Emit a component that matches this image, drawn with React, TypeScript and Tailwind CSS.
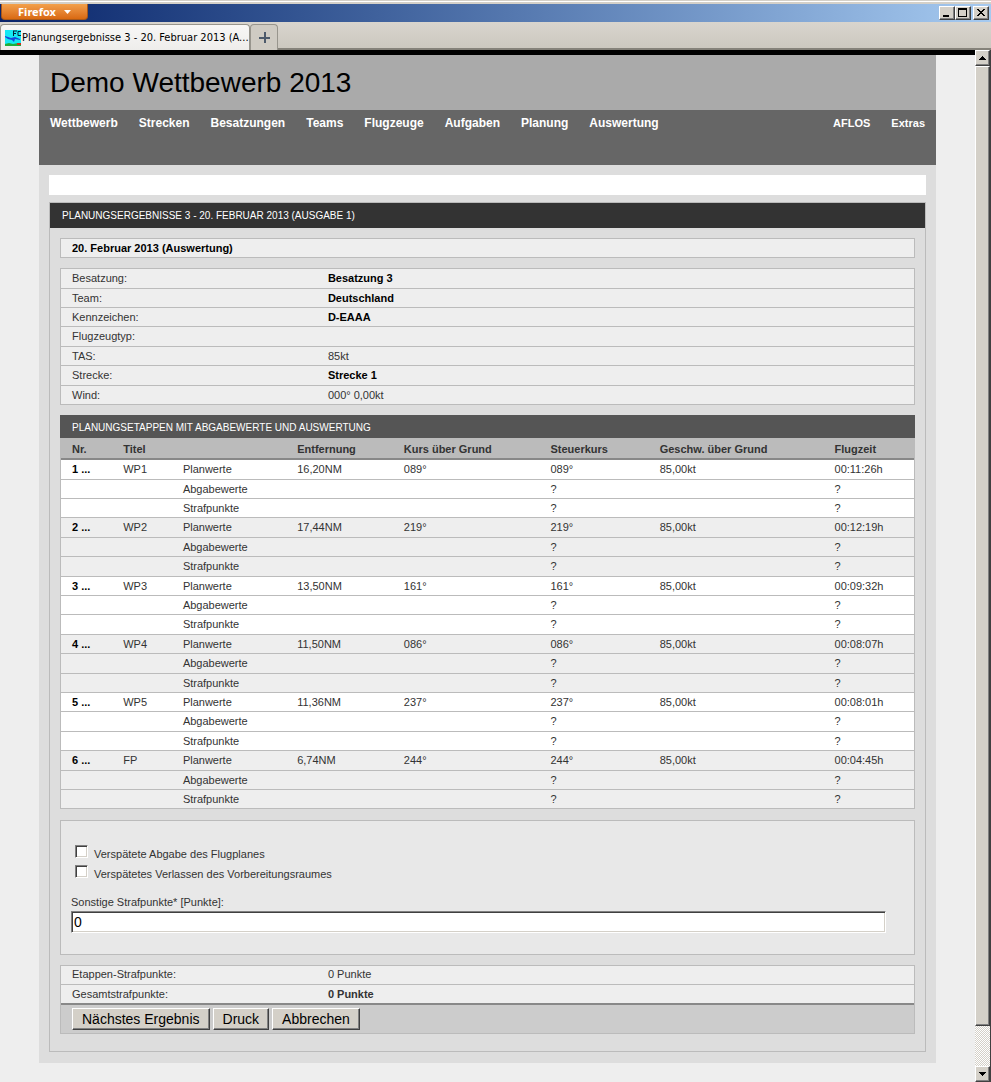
import React from 'react';

type Leg = {
  title: string;
  distance: string;
  track: string;
  heading: string;
  speed: string;
  time: string;
};

const legs: Leg[] = [
  { title: 'WP1', distance: '16,20NM', track: '089°', heading: '089°', speed: '85,00kt', time: '00:11:26h' },
  { title: 'WP2', distance: '17,44NM', track: '219°', heading: '219°', speed: '85,00kt', time: '00:12:19h' },
  { title: 'WP3', distance: '13,50NM', track: '161°', heading: '161°', speed: '85,00kt', time: '00:09:32h' },
  { title: 'WP4', distance: '11,50NM', track: '086°', heading: '086°', speed: '85,00kt', time: '00:08:07h' },
  { title: 'WP5', distance: '11,36NM', track: '237°', heading: '237°', speed: '85,00kt', time: '00:08:01h' },
  { title: 'FP', distance: '6,74NM', track: '244°', heading: '244°', speed: '85,00kt', time: '00:04:45h' },
];

const info = [
  { label: 'Besatzung:', value: 'Besatzung 3', link: true },
  { label: 'Team:', value: 'Deutschland', link: true },
  { label: 'Kennzeichen:', value: 'D-EAAA', link: true },
  { label: 'Flugzeugtyp:', value: '', link: false },
  { label: 'TAS:', value: '85kt', link: false },
  { label: 'Strecke:', value: 'Strecke 1', link: true },
  { label: 'Wind:', value: '000° 0,00kt', link: false },
];

const menu = ['Wettbewerb', 'Strecken', 'Besatzungen', 'Teams', 'Flugzeuge', 'Aufgaben', 'Planung', 'Auswertung'];
const sideMenu = ['AFLOS', 'Extras'];

const raised =
  'border border-t-white border-l-white border-r-[#404040] border-b-[#404040] bg-[#d4d0c8] shadow-[inset_-1px_-1px_0_#808080]';

function WindowButton({ label, children }: { label: string; children: React.ReactNode }) {
  return (
    <button type="button" aria-label={label} className={`${raised} flex h-[14px] w-4 items-center justify-center`}>
      {children}
    </button>
  );
}

function BrowserChrome() {
  return (
    <header className="bg-[#d4d0c8]">
      <div className="h-1 pt-px">
        <div className="h-px bg-white" />
      </div>
      <div className="flex h-[18px] items-start justify-between bg-gradient-to-r from-[#0a246a] to-[#a6caf0] pr-[2px] pl-px">
        <button
          type="button"
          className="flex h-4 w-[87px] items-center justify-center gap-2 rounded-b border border-t-0 border-[#a8581a] bg-gradient-to-b from-[#f2a04a] to-[#d9690f] font-['Noto_Sans',sans-serif] text-[11px] leading-none font-bold text-white"
        >
          Firefox
          <svg width="7" height="4" viewBox="0 0 7 4" aria-hidden="true">
            <path d="M0 0h7L3.500 4z" fill="#fff" />
          </svg>
        </button>
        <div className="flex pt-[2px]">
          <WindowButton label="Minimieren">
            <svg width="12" height="10" viewBox="0 0 12 10" shapeRendering="crispEdges">
              <path d="M2 7h6v2H2z" />
            </svg>
          </WindowButton>
          <WindowButton label="Maximieren">
            <svg width="12" height="10" viewBox="0 0 12 10" shapeRendering="crispEdges">
              <path d="M1 0h9v9H1zM2 2v6h7V2z" fillRule="evenodd" />
            </svg>
          </WindowButton>
          <div className="ml-[2px]">
            <WindowButton label="Schließen">
              <svg width="12" height="10" viewBox="0 0 12 10" shapeRendering="crispEdges">
                <path d="M2 1h2v1h1v1h2V2h1V1h2v1H9v1H8v1H7v1h1v1h1v1h1v1H8V7H7V6H5v1H4v1H2V7h1V6h1V5h1V4H4V3H3V2H2z" />
              </svg>
            </WindowButton>
          </div>
        </div>
      </div>
      <div className="flex h-7 items-end bg-gradient-to-b from-[#d9d5ce] to-[#cbc7be] shadow-[inset_0_-2px_0_#85827a]">
        <button
          type="button"
          className="flex h-[26px] w-[250px] items-center gap-px rounded-t-sm border border-b-0 border-[#98958d] bg-gradient-to-b from-[#f8f7f6] to-[#eeedeb] pl-1 text-left font-['DejaVu_Sans_Condensed','DejaVu_Sans',sans-serif] text-[11px] whitespace-nowrap text-black"
        >
          <svg className="shrink-0" width="16" height="16" viewBox="0 0 16 16" aria-hidden="true">
            <path d="M0 0h16v16H0z" fill="#14e8f4" />
            <path d="M0 14l4-1 4 1 5-1 3 1v2H0z" fill="#1fae3c" />
            <path d="M12 13h4v2h-4z" fill="#c8321e" />
            <path d="M0 6l3 1 3 1 4-1 5 2v1l-5-1-1 3-2-2-4-1-3-2z" fill="#1846d8" />
            <path d="M8 1h4M8.500 1v5M8 3.500h3M16 1.500h-3v4h3" fill="none" stroke="#06233a" />
          </svg>
          <span>Planungsergebnisse 3 - 20. Februar 2013 (A...</span>
        </button>
        <button
          type="button"
          aria-label="Neuer Tab"
          className="flex h-[26px] w-7 items-center justify-center rounded-t-sm border border-b-0 border-[#98958d] bg-[#cfcbc3]"
        >
          <svg width="11" height="11" viewBox="0 0 11 11" shapeRendering="crispEdges">
            <path d="M5 0h2v5h4v2H7v4H5V7H0V5h5z" fill="#4d5a6b" />
          </svg>
        </button>
      </div>
    </header>
  );
}

function ScrollBar() {
  return (
    <div className="flex w-4 shrink-0 flex-col border-r border-[#404040] bg-[repeating-conic-gradient(#ffffff_0_25%,#d4d0c8_0_50%)] bg-[length:2px_2px]">
      <button type="button" aria-label="Nach oben" className={`${raised} flex h-4 items-center justify-center`}>
        <svg width="7" height="4" viewBox="0 0 7 4" shapeRendering="crispEdges">
          <path d="M3 0h1v1h1v1h1v1h1v1H0V3h1V2h1V1h1z" />
        </svg>
      </button>
      <div className={`${raised} flex-1`} />
      <div className="h-10" />
      <button type="button" aria-label="Nach unten" className={`${raised} flex h-4 items-center justify-center`}>
        <svg width="7" height="4" viewBox="0 0 7 4" shapeRendering="crispEdges">
          <path d="M0 0h7v1H6v1H5v1H4v1H3V3H2V2H1V1H0z" />
        </svg>
      </button>
    </div>
  );
}

function MenuLinks({ items }: { items: string[] }) {
  return (
    <ul className="flex gap-[21px]">
      {items.map((item) => (
        <li key={item}>
          <a href="#" className="text-white">
            {item}
          </a>
        </li>
      ))}
    </ul>
  );
}

const cell = 'border-b border-[#bbb] pt-[2px] pl-[11px] align-top';
const rowHeight = 'h-[19px] nth-[5n+1]:h-5 nth-[5n+4]:h-5';

function InfoTable() {
  return (
    <table className="mt-[10px] w-full table-fixed border-separate border-spacing-0 border border-b-0 border-[#bbb] bg-[#eee]">
      <tbody>
        {info.map((row) => (
          <tr key={row.label} className={rowHeight}>
            <th scope="row" className={`${cell} w-[30%] text-left font-normal`}>
              {row.label}
            </th>
            <td className={cell}>
              {row.link ? (
                <a href="#" className="font-bold text-black">
                  {row.value}
                </a>
              ) : (
                row.value
              )}
            </td>
          </tr>
        ))}
      </tbody>
    </table>
  );
}

function LegTable() {
  const rows = legs.flatMap((leg, i) => [
    { nr: `${i + 1} ...`, kind: 'Planwerte', ...leg, shade: i % 2 },
    { nr: '', kind: 'Abgabewerte', title: '', distance: '', track: '', heading: '?', speed: '', time: '?', shade: i % 2 },
    { nr: '', kind: 'Strafpunkte', title: '', distance: '', track: '', heading: '?', speed: '', time: '?', shade: i % 2 },
  ]);
  return (
    <section className="mt-[10px]">
      <h3 className="h-[23px] bg-[#555] pl-3 text-[10px] leading-[25px] text-white uppercase">
        Planungsetappen mit Abgabewerte und Auswertung
      </h3>
      <table className="w-full table-fixed border-separate border-spacing-0 border-x border-[#bbb]">
        <thead>
          <tr className="h-[22px] bg-[#bbb] text-left [&>th]:border-b-2 [&>th]:border-[#888] [&>th]:pt-[2px] [&>th]:pl-[11px]">
            <th className="w-[6%]">Nr.</th>
            <th className="w-[7%]">Titel</th>
            <th className="w-[13.4%]" aria-label="Werte" />
            <th className="w-[12.5%]">Entfernung</th>
            <th className="w-[17.2%]">Kurs über Grund</th>
            <th className="w-[12.8%]">Steuerkurs</th>
            <th className="w-[20.5%]">Geschw. über Grund</th>
            <th>Flugzeit</th>
          </tr>
        </thead>
        <tbody>
          {rows.map((row, i) => (
            <tr key={i} className={`${rowHeight} ${row.shade ? 'bg-[#eee]' : 'bg-white'}`}>
              <td className={cell}>
                {row.nr && (
                  <a href="#" className="font-bold text-black">
                    {row.nr}
                  </a>
                )}
              </td>
              <td className={cell}>{row.title}</td>
              <td className={cell}>{row.kind}</td>
              <td className={cell}>{row.distance}</td>
              <td className={cell}>{row.track}</td>
              <td className={cell}>{row.heading}</td>
              <td className={cell}>{row.speed}</td>
              <td className={cell}>{row.time}</td>
            </tr>
          ))}
        </tbody>
      </table>
    </section>
  );
}

const sunken =
  'appearance-none border border-t-[#808080] border-l-[#808080] border-r-white border-b-white bg-white shadow-[inset_1px_1px_0_#404040,inset_-1px_-1px_0_#d4d0c8]';

function PenaltyForm() {
  return (
    <fieldset className="mt-[11px] border border-[#bbb] bg-[#e8e8e8] pt-6 pr-7 pb-[21px] pl-[10px]">
      {['Verspätete Abgabe des Flugplanes', 'Verspätetes Verlassen des Vorbereitungsraumes'].map((text) => (
        <label key={text} className="flex h-5 items-start gap-[6px] pl-1">
          <input type="checkbox" className={`${sunken} size-[13px] checked:bg-[#404040]`} />
          <span className="pt-[2px]">{text}</span>
        </label>
      ))}
      <label htmlFor="other" className="mt-[10px] block pb-[2px]">
        Sonstige Strafpunkte* [Punkte]:
      </label>
      <input
        id="other"
        type="text"
        defaultValue="0"
        className={`${sunken} block h-[22px] w-full pl-[2px] text-sm text-black`}
      />
    </fieldset>
  );
}

function Totals() {
  return (
    <section className="mt-[10px] border border-[#bbb]">
      <table className="w-full table-fixed border-separate border-spacing-0 bg-[#eee]">
        <tbody>
          <tr className="h-[19px]">
            <th scope="row" className="w-[30%] border-b border-[#bbb] pt-px pl-[11px] text-left align-top font-normal">
              Etappen-Strafpunkte:
            </th>
            <td className="border-b border-[#bbb] pt-px pl-[11px] align-top">0 Punkte</td>
          </tr>
          <tr className="h-5">
            <th scope="row" className="border-b-2 border-[#888] pl-[11px] text-left font-normal">
              Gesamtstrafpunkte:
            </th>
            <td className="border-b-2 border-[#888] pl-[11px] font-bold">0 Punkte</td>
          </tr>
        </tbody>
      </table>
      <div className="flex h-7 items-start gap-[3px] bg-[#ccc] pt-[3px] pl-[11px] text-sm text-black">
        {['Nächstes Ergebnis', 'Druck', 'Abbrechen'].map((text) => (
          <button key={text} type="button" className={`${raised} h-[22px] px-[9px] leading-none`}>
            {text}
          </button>
        ))}
      </div>
    </section>
  );
}

export default function App() {
  return (
    <div className="flex min-h-screen flex-col bg-[#eee] font-['Liberation_Sans',Arial,sans-serif] text-[11px] leading-[14px] text-[#333]">
      <BrowserChrome />
      <div className="flex flex-1">
        <div className="min-w-0 flex-1 border-t-[5px] border-black pb-[19px]">
          <div className="mx-auto w-[92%] bg-[#ddd]">
            <h1 className="h-[55px] bg-[#aaa] pl-[11px] text-[28px] leading-[55px] text-black">Demo Wettbewerb 2013</h1>
            <nav className="flex h-[55px] justify-between bg-[#666] px-[11px] pt-[6px] font-bold">
              <div className="text-xs leading-[14px]">
                <MenuLinks items={menu} />
              </div>
              <MenuLinks items={sideMenu} />
            </nav>
            <main className="px-[10px] pt-[10px] pb-[11px]">
              <div className="h-5 bg-white" />
              <section className="mt-[7px] border border-[#bbb] pb-[17px]">
                <h2 className="h-[25px] bg-[#333] pl-3 text-[10px] leading-[25px] text-white uppercase">
                  Planungsergebnisse 3 - 20. Februar 2013 (Ausgabe 1)
                </h2>
                <div className="px-[10px] pt-[10px]">
                  <div className="h-5 border border-[#bbb] bg-[#eee] pl-[11px] leading-[18px]">
                    <a href="#" className="font-bold text-black">
                      20. Februar 2013 (Auswertung)
                    </a>
                  </div>
                  <InfoTable />
                  <LegTable />
                  <PenaltyForm />
                  <Totals />
                </div>
              </section>
            </main>
          </div>
        </div>
        <ScrollBar />
      </div>
    </div>
  );
}
